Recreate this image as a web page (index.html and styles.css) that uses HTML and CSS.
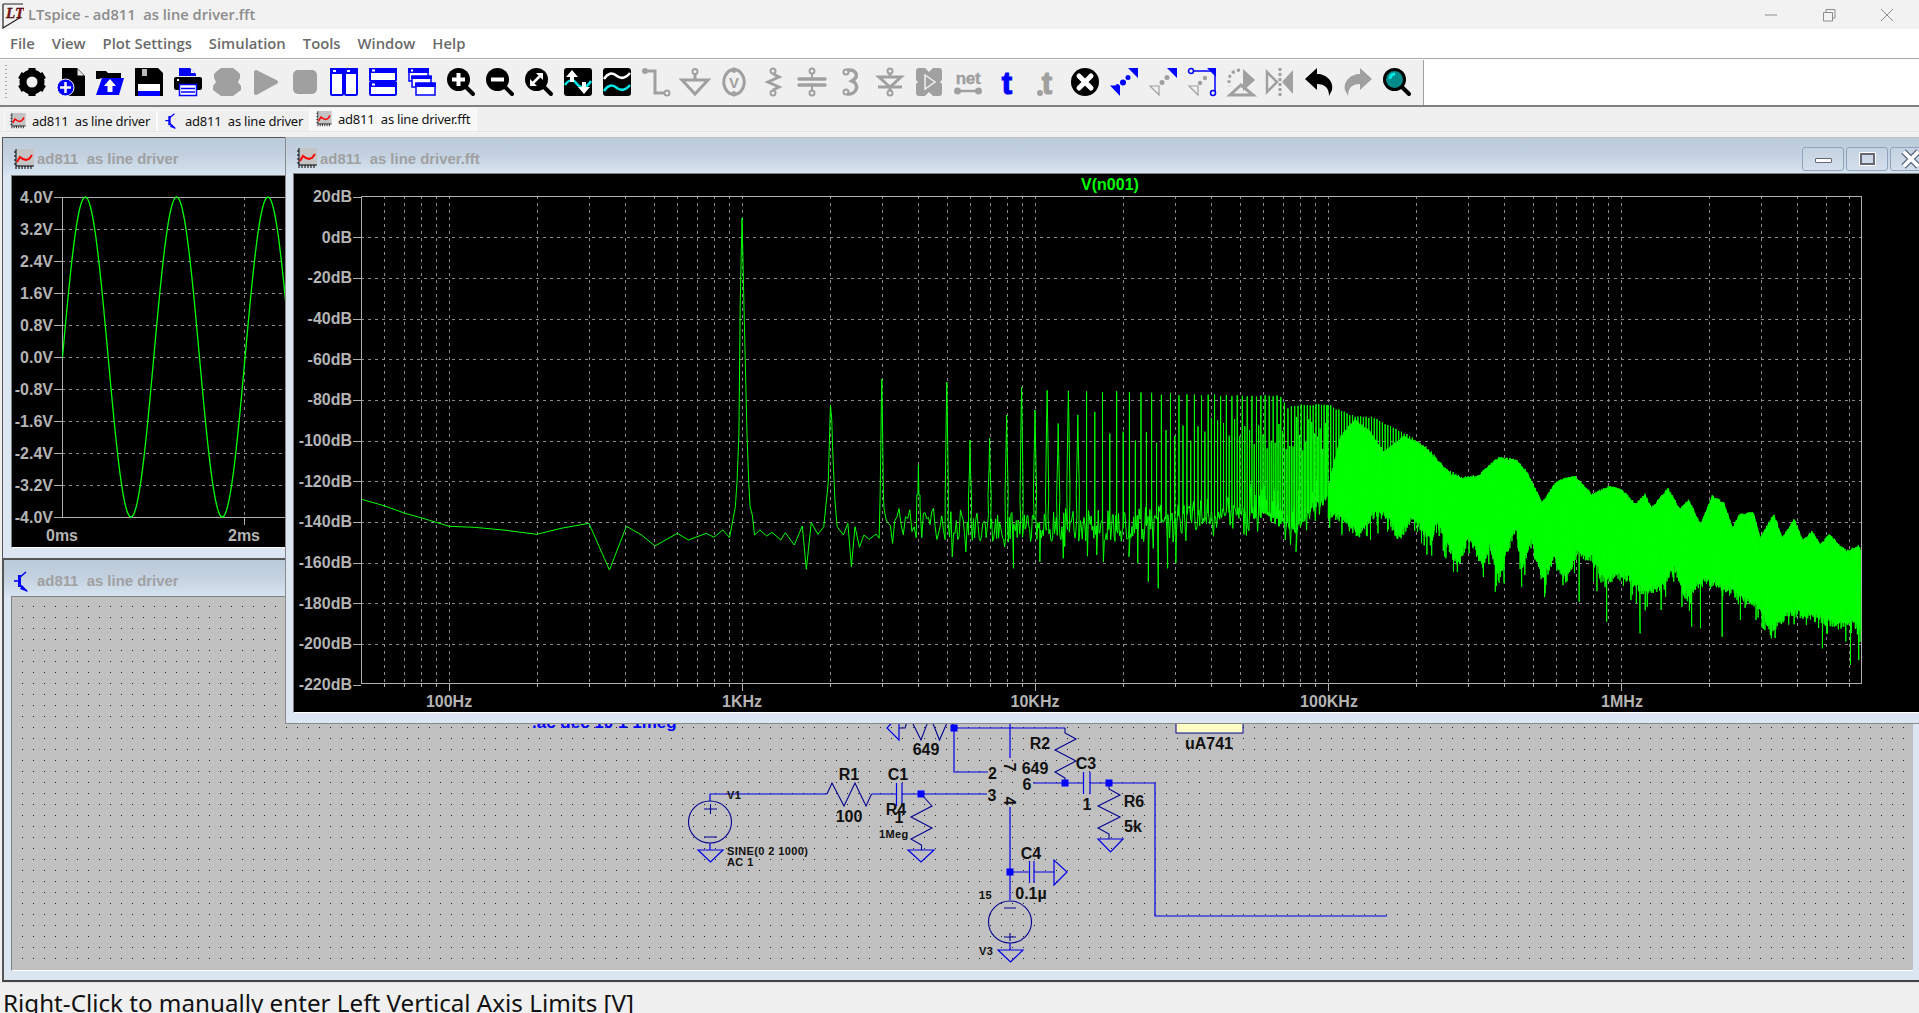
FILE: index.html
```html
<!DOCTYPE html>
<html lang="en">
<head>
<meta charset="utf-8">
<title>LTspice - ad811  as line driver.fft</title>
<link rel="stylesheet" href="styles.css">
</head>
<body>
<svg class="defs" width="0" height="0">
  <symbol id="chart" viewBox="0 0 20 21">
    <rect x="3" y="0" width="17" height="17" fill="#c4c4c4"/>
    <path d="M2 0V20M0 3H2M0 7H2M0 11H2M0 15H2M2 17H20M5 17V20M8 17V20M11 17V20M14 17V20M17 17V20" stroke="#000" stroke-width="1" fill="none"/>
    <path d="M3 13L6 8L9 10L12 11L15 10L18 6" stroke="#f00" stroke-width="2" fill="none"/>
  </symbol>
  <symbol id="bjt" viewBox="0 0 15 21">
    <path d="M0 10H5" stroke="#0000ff" stroke-width="1.600" fill="none"/>
    <path d="M5.500 4V16" stroke="#0000ff" stroke-width="3" fill="none"/>
    <path d="M5 7L12 1M5 13L13 20" stroke="#0000ff" stroke-width="1.600" fill="none"/>
    <path d="M8 14L14 21L6 18Z" fill="#0000ff"/>
  </symbol>
</svg>

<div class="app">
  <header class="titlebar">
    <svg class="logo" viewBox="0 0 22 28">
      <path d="M1 3H21M1 3V27L19 16" stroke="#222" stroke-width="1.200" fill="none"/>
      <text class="logo-t" x="4" y="17">LT</text>
    </svg>
    <span class="app-title">LTspice - ad811  as line driver.fft</span>
    <div class="caption">
      <svg viewBox="0 0 14 14"><path d="M1 7H13" stroke="#8c8c8c" fill="none"/></svg>
      <svg viewBox="0 0 14 14"><path d="M1.500 4.500H10.500V13H1.500ZM4 4V1.500H13V10H11" stroke="#8c8c8c" fill="none"/></svg>
      <svg viewBox="0 0 14 14"><path d="M1 1L13 13M13 1L1 13" stroke="#8c8c8c" fill="none"/></svg>
    </div>
  </header>

  <nav class="menubar">
    <span>File</span><span>View</span><span>Plot Settings</span><span>Simulation</span><span>Tools</span><span>Window</span><span>Help</span>
  </nav>

  <div class="toolrow">
    <div class="toolbar">
      <i class="grip"></i>
      <div class="icons">
        <!-- gear -->
        <svg viewBox="0 0 28 28"><circle cx="14" cy="14" r="9" fill="none" stroke="#000" stroke-width="7"/><g fill="#000"><rect x="10.500" y="0" width="7" height="5"/><rect x="10.500" y="23" width="7" height="5"/><rect x="10.500" y="0" width="7" height="5" transform="rotate(60 14 14)"/><rect x="10.500" y="0" width="7" height="5" transform="rotate(120 14 14)"/><rect x="10.500" y="0" width="7" height="5" transform="rotate(240 14 14)"/><rect x="10.500" y="0" width="7" height="5" transform="rotate(300 14 14)"/></g></svg>
        <!-- new -->
        <svg viewBox="0 0 28 28"><path d="M5 0H20L28 8V28H5Z" fill="#000"/><path d="M20.500 1L27 7.500H20.500Z" fill="#e8e8e8"/><circle cx="8.500" cy="19.500" r="8.500" fill="#0000ff" stroke="#fff" stroke-width="1"/><path d="M8.500 14V25M3 19.500H14" stroke="#fff" stroke-width="2.500"/></svg>
        <!-- open -->
        <svg viewBox="0 0 28 28"><path d="M0 11V3H10L12 5H25V10H6L3 11Z" fill="#000"/><path d="M6 10H28L23 27H0Z" fill="#0000ff"/><path d="M14 11L20 18H16.500V24H11.500V18H8Z" fill="#fff"/></svg>
        <!-- save -->
        <svg viewBox="0 0 28 28"><path d="M0 0H23L28 5V28H0Z" fill="#000"/><rect x="7" y="1" width="5" height="7" fill="#bbb"/><rect x="3" y="16" width="22" height="7" fill="#fff"/><rect x="3" y="23" width="22" height="5" fill="#0000ff"/></svg>
        <!-- print -->
        <svg viewBox="0 0 28 28"><path d="M5 0H16L22 6V8H5Z" fill="#0000ff"/><path d="M17 1L21 5H17Z" fill="#fff"/><rect x="0" y="9" width="28" height="13" rx="2" fill="#000"/><rect x="3" y="11" width="2" height="2" fill="#fff"/><rect x="5.500" y="16.500" width="17" height="11" fill="#fff" stroke="#0000ff" stroke-width="1.500"/><path d="M7 20.500H21M7 24H21" stroke="#0000ff" stroke-width="1.500"/></svg>
        <!-- halt -->
        <svg viewBox="0 0 28 28"><path d="M8 0H20L24 3L27 6V10L25 14L28 18V22L24 25L20 28H8L4 25L0 22V18L3 14L1 10V6L4 3Z" fill="#a0a0a0"/></svg>
        <!-- run -->
        <svg viewBox="0 0 28 28"><path d="M4 4L24 14L4 25Z" fill="#a0a0a0" stroke="#a0a0a0" stroke-width="4" stroke-linejoin="round"/></svg>
        <!-- stop -->
        <svg viewBox="0 0 28 28"><rect x="2" y="2" width="24" height="24" rx="5" fill="#a0a0a0"/></svg>
        <!-- tile v -->
        <svg viewBox="0 0 28 28"><g fill="#fff" stroke="#0000ff" stroke-width="2"><rect x="1" y="1" width="12" height="26" rx="1"/><rect x="15" y="1" width="12" height="26" rx="1"/></g><rect x="0" y="0" width="14" height="6" fill="#0000ff"/><rect x="14" y="0" width="14" height="6" fill="#0000ff"/><rect x="3" y="2" width="3" height="2" fill="#fff"/><rect x="17" y="2" width="3" height="2" fill="#fff"/></svg>
        <!-- tile h -->
        <svg viewBox="0 0 28 28"><g fill="#fff" stroke="#0000ff" stroke-width="2"><rect x="1" y="1" width="26" height="12" rx="1"/><rect x="1" y="15" width="26" height="12" rx="1"/></g><rect x="0" y="0" width="28" height="5" fill="#0000ff"/><rect x="0" y="14" width="28" height="5" fill="#0000ff"/><rect x="3" y="1.500" width="3" height="2" fill="#fff"/><rect x="3" y="15.500" width="3" height="2" fill="#fff"/></svg>
        <!-- cascade -->
        <svg viewBox="0 0 28 28"><g fill="#fff" stroke="#0000ff" stroke-width="1.500"><rect x="1" y="1" width="19" height="12"/><rect x="4" y="8" width="19" height="11"/><rect x="8" y="15" width="19" height="12"/></g><rect x="0" y="0" width="21" height="5" fill="#0000ff"/><rect x="3" y="8" width="21" height="3" fill="#0000ff"/><rect x="7" y="15" width="21" height="4" fill="#0000ff"/><rect x="3" y="1.500" width="2" height="2" fill="#fff"/></svg>
        <!-- zoom in -->
        <svg viewBox="0 0 28 28"><path d="M18 18L26 26" stroke="#000" stroke-width="4" stroke-linecap="round"/><circle cx="11.500" cy="11.500" r="11.500" fill="#000"/><path d="M11.500 5V18M5 11.500H18" stroke="#fff" stroke-width="4"/></svg>
        <!-- zoom out -->
        <svg viewBox="0 0 28 28"><path d="M18 18L26 26" stroke="#000" stroke-width="4" stroke-linecap="round"/><circle cx="11.500" cy="11.500" r="11.500" fill="#000"/><path d="M5 11.500H18" stroke="#fff" stroke-width="4"/></svg>
        <!-- zoom fit -->
        <svg viewBox="0 0 28 28"><path d="M18 18L26 26" stroke="#000" stroke-width="4" stroke-linecap="round"/><circle cx="11.500" cy="11.500" r="11.500" fill="#000"/><path d="M7 16L16 7" stroke="#fff" stroke-width="2.500"/><path d="M11 5H18V12ZM5 11V18H12Z" fill="#fff"/></svg>
        <!-- wave up/down -->
        <svg viewBox="0 0 28 28"><rect width="28" height="28" rx="3" fill="#000"/><path d="M1 17C5 11 9 11 13 16C17 21 22 21 27 13" stroke="#00e8e8" stroke-width="2.500" fill="none"/><path d="M8 2L14 9H10V14H6V9H2Z" fill="#fff"/><path d="M20 26L14 19H18V14H22V19H26Z" fill="#fff"/></svg>
        <!-- wave 2 -->
        <svg viewBox="0 0 28 28"><rect width="28" height="28" rx="3" fill="#000"/><path d="M1 11C5 5 9 4 14 8C18 11 22 11 27 5" stroke="#fff" stroke-width="2.500" fill="none"/><path d="M1 23C5 17 9 16 14 20C18 23 22 23 27 17" stroke="#00e8e8" stroke-width="2.500" fill="none"/></svg>
        <!-- wire -->
        <svg viewBox="0 0 28 28"><circle cx="3" cy="3" r="3" fill="#a0a0a0"/><path d="M3 3H13V25H22" stroke="#a0a0a0" stroke-width="3" fill="none"/><circle cx="25" cy="25" r="2.500" fill="none" stroke="#a0a0a0" stroke-width="2"/></svg>
        <!-- ground -->
        <svg viewBox="0 0 28 28"><circle cx="14" cy="3.500" r="2.500" fill="none" stroke="#a0a0a0" stroke-width="2"/><path d="M14 6V12M1 12H27L14 26Z" stroke="#a0a0a0" stroke-width="3" fill="none"/></svg>
        <!-- voltage -->
        <svg viewBox="0 0 28 28"><path d="M14 1L19 3C26 9 26 19 19 25L14 27L9 25C2 19 2 9 9 3Z" stroke="#a0a0a0" stroke-width="3" fill="none" stroke-linejoin="round"/><circle cx="14" cy="3" r="2" fill="#a0a0a0"/><circle cx="14" cy="25" r="2" fill="#a0a0a0"/><text class="ti ti-v" x="14" y="19.500">V</text></svg>
        <!-- resistor -->
        <svg viewBox="0 0 28 28"><g fill="none" stroke="#a0a0a0"><circle cx="14" cy="3" r="2.500" stroke-width="2"/><circle cx="14" cy="25" r="2.500" stroke-width="2"/><path d="M14 6L20 9L9 14L20 19L14 22" stroke-width="3"/></g></svg>
        <!-- capacitor -->
        <svg viewBox="0 0 28 28"><g fill="none" stroke="#a0a0a0"><circle cx="14" cy="3" r="2.500" stroke-width="2"/><circle cx="14" cy="25" r="2.500" stroke-width="2"/><path d="M14 6V11M14 17V22" stroke-width="2"/><path d="M1 11H27M1 17H27" stroke-width="3.500" stroke-linecap="round"/></g></svg>
        <!-- inductor -->
        <svg viewBox="0 0 28 28"><g fill="none" stroke="#a0a0a0"><circle cx="9" cy="4" r="2.500" stroke-width="2"/><circle cx="9" cy="24" r="2.500" stroke-width="2"/><path d="M10 2C19 1 23 8 15 13C23 16 20 27 10 26" stroke-width="3.500"/></g></svg>
        <!-- diode -->
        <svg viewBox="0 0 28 28"><g fill="none" stroke="#a0a0a0"><circle cx="14" cy="3" r="2.500" stroke-width="2"/><circle cx="14" cy="25" r="2.500" stroke-width="2"/><path d="M14 6V9M14 19V22M3 9H25L14 19Z" stroke-width="3"/><path d="M2 19H26" stroke-width="3"/></g></svg>
        <!-- component -->
        <svg viewBox="0 0 28 28"><rect x="1" y="0" width="26" height="28" rx="3" fill="#a0a0a0"/><path d="M10 0H18L14 4ZM10 28H18L14 24ZM0 11L3 14L0 17ZM28 11L25 14L28 17Z" fill="#f0f0f0"/><path d="M10 7L20 14L10 21Z" fill="#a0a0a0" stroke="#f0f0f0" stroke-width="1.500"/></svg>
        <!-- net -->
        <svg viewBox="0 0 28 28"><text class="ti ti-net" x="14" y="16">net</text><path d="M3 23H25" stroke="#a0a0a0" stroke-width="2.500"/><circle cx="3.500" cy="23" r="3.500" fill="#a0a0a0"/><circle cx="24.500" cy="23" r="3.500" fill="#a0a0a0"/></svg>
        <!-- text t -->
        <svg viewBox="0 0 28 28"><text class="ti ti-t ti-blue" x="14" y="26">t</text></svg>
        <!-- spice t -->
        <svg viewBox="0 0 28 28"><text class="ti ti-t" x="15" y="26">t</text><circle cx="8" cy="25" r="3" fill="#a0a0a0"/></svg>
        <!-- delete -->
        <svg viewBox="0 0 28 28"><circle cx="14" cy="14" r="14" fill="#000"/><path d="M8 8L20 20M20 8L8 20" stroke="#fff" stroke-width="5" stroke-linecap="round"/></svg>
        <!-- move -->
        <svg viewBox="0 0 28 28"><path d="M18 0H28V10ZM0 17.500H10V28Z" fill="#0000ff"/><circle cx="18" cy="9.500" r="2.500" fill="#0000ff"/><circle cx="13" cy="14.500" r="3" fill="#0000ff"/><circle cx="7.500" cy="18" r="2" fill="#0000ff"/></svg>
        <!-- drag -->
        <svg viewBox="0 0 28 28"><path d="M18 0H28V10Z" fill="#0000ff"/><path d="M1 18H10V27Z" fill="none" stroke="#a0a0a0" stroke-width="1.200"/><circle cx="18" cy="9.500" r="2.500" fill="#a0a0a0"/><circle cx="13" cy="14.500" r="2.500" fill="#a0a0a0"/></svg>
        <!-- wire drag -->
        <svg viewBox="0 0 28 28"><path d="M3 3H27V25" stroke="#0000ff" stroke-width="1.500" fill="none"/><path d="M19 0H28V9Z" fill="#0000ff"/><circle cx="3" cy="3" r="2.500" fill="#f0f0f0" stroke="#0000ff" stroke-width="1.500"/><circle cx="25" cy="25" r="2.500" fill="#f0f0f0" stroke="#0000ff" stroke-width="1.500"/><path d="M1 18H10V27Z" fill="none" stroke="#a0a0a0" stroke-width="1.200"/><circle cx="17" cy="10" r="2.200" fill="#a0a0a0"/><circle cx="12" cy="15" r="2.200" fill="#a0a0a0"/></svg>
        <!-- rotate -->
        <svg viewBox="0 0 28 28"><path d="M16 1L28 12L16 23Z" fill="#a0a0a0"/><path d="M3 27H26L14 17Z" fill="none" stroke="#a0a0a0" stroke-width="3"/><path d="M13 2C4 3 0 9 3 18" fill="none" stroke="#a0a0a0" stroke-width="3" stroke-dasharray="3 2.500"/></svg>
        <!-- mirror -->
        <svg viewBox="0 0 28 28"><path d="M1 4L11 14L1 24Z" fill="none" stroke="#a0a0a0" stroke-width="2.500"/><path d="M27 2V26L16 14Z" fill="#a0a0a0"/><path d="M14 0V28" stroke="#a0a0a0" stroke-width="3" stroke-dasharray="3 2"/></svg>
        <!-- undo -->
        <svg viewBox="0 0 28 28"><path d="M0 11L12 0V6C22 6 29 14 27 22L24 28C24 20 20 16 12 16V22Z" fill="#000"/></svg>
        <!-- redo -->
        <svg viewBox="0 0 28 28"><path d="M28 11L16 0V6C6 6 -1 14 1 22L4 28C4 20 8 16 16 16V22Z" fill="#a0a0a0"/></svg>
        <!-- find -->
        <svg viewBox="0 0 28 28"><path d="M18 18L26 26" stroke="#000" stroke-width="4" stroke-linecap="round"/><circle cx="11.500" cy="11.500" r="10" fill="#008b8b" stroke="#000" stroke-width="3"/><path d="M7 11C7 8 9 6 12 6" stroke="#00e8e8" stroke-width="3" fill="none"/></svg>
      </div>
    </div>
    <div class="tool-blank"></div>
  </div>

  <div class="tabbar">
    <div class="tab"><svg class="tab-ic"><use href="#chart"/></svg><span>ad811  as line driver</span></div>
    <div class="tab"><svg class="tab-ic"><use href="#bjt"/></svg><span>ad811  as line driver</span></div>
    <div class="tab tab-on"><svg class="tab-ic"><use href="#chart"/></svg><span>ad811  as line driver.fft</span></div>
  </div>

  <main class="mdi">
    <!-- waveform window -->
    <section class="win win-wave">
      <div class="win-title"><svg class="win-ic"><use href="#chart"/></svg><span>ad811  as line driver</span></div>
      <div class="win-body">
        <svg class="plot plot-wave" viewBox="12 176 300 371" id="wave">
          <g id="wave-grid"></g>
          <path id="wave-trace" class="trace trace-wave"/>
          <g class="ylab">
            <text x="53" y="203">4.0V</text><text x="53" y="235">3.2V</text><text x="53" y="267">2.4V</text><text x="53" y="299">1.6V</text><text x="53" y="331">0.8V</text><text x="53" y="363">0.0V</text><text x="53" y="395">-0.8V</text><text x="53" y="427">-1.6V</text><text x="53" y="459">-2.4V</text><text x="53" y="491">-3.2V</text><text x="53" y="523">-4.0V</text>
          </g>
          <g class="xlab"><text x="62" y="541">0ms</text><text x="244" y="541">2ms</text></g>
        </svg>
      </div>
    </section>

    <!-- schematic window -->
    <section class="win win-sch">
      <div class="win-title"><svg class="win-ic win-ic-bjt"><use href="#bjt"/></svg><span>ad811  as line driver</span></div>
      <div class="win-body">
        <svg class="sheet" viewBox="12 597 1901 372">
          <defs><pattern id="dots" x="22" y="606" width="11" height="11" patternUnits="userSpaceOnUse"><rect width="1" height="1" class="dot"/></pattern></defs>
          <rect x="12" y="597" width="1901" height="372" fill="url(#dots)"/>
          <text class="sc-dir" x="532" y="728">.ac dec 10 1 1meg</text>
          <rect class="sc-op" x="1176" y="715" width="67" height="18"/>
          <g class="wire">
            <path d="M710 801V794H827M871.500 794H896.500M902 794H987"/>
            <path d="M954 728H1065M954 728V772H988M1010 715V758M1010 807V900"/>
            <path d="M1033 783H1083.500M1090 783H1155V916H1387"/>
            <path d="M1010 872H1029.500M1034 872H1054"/>
            <path d="M710 843V850M1010 943V950"/>
            <path d="M896.500 783V806M902 783V806M1083.500 772V794M1090 772V794M1029.500 861V883M1034 861V883"/>
            <path d="M698 850H723L710.500 862ZM908 850H934L921 862ZM1098 839H1123L1110.500 852ZM998 950H1023L1010.500 962Z"/>
            <path d="M1054 860V885L1067 872Z"/>
            <path d="M899 715V740L887 728Z"/>
          </g>
          <g class="part">
            <path d="M827 794L832 783L844 806L855 783L866 806L871.500 794"/>
            <path d="M921 794L932 806L911 817L932 828L911 839L921.500 845V850"/>
            <path d="M1065 728V733L1076 739L1055 750L1076 761L1055 772L1065 778V783"/>
            <path d="M1109 783V789L1120 795L1098 806L1120 817L1098 828L1109 834V839"/>
            <path d="M899 728H905L909 716L921 740L930 716L939.500 740L950 716L954 728"/>
            <ellipse cx="710" cy="822" rx="21.500" ry="21"/>
            <ellipse cx="1010" cy="922" rx="21.500" ry="21"/>
            <path d="M704 809H717M710.500 804V814M704 837H717M1004 908H1016M1004 937H1016M1010 933V941"/>
          </g>
          <g class="node">
            <rect x="950.500" y="724.500" width="7" height="7"/><rect x="917.500" y="790.500" width="7" height="7"/><rect x="1061.500" y="779.500" width="7" height="7"/><rect x="1105.500" y="779.500" width="7" height="7"/><rect x="1006.500" y="868.500" width="7" height="7"/>
          </g>
          <g class="sc-lab">
            <text x="849" y="780">R1</text><text x="849" y="822">100</text><text x="898" y="780">C1</text><text x="896" y="815">R4</text><text x="899" y="823">1</text>
            <text x="926" y="755">649</text><text x="1040" y="749">R2</text><text x="1035" y="774">649</text><text x="1086" y="769">C3</text><text x="1087" y="810">1</text>
            <text x="1134" y="807">R6</text><text x="1133" y="832">5k</text><text x="1027" y="790">6</text><text x="992.500" y="779">2</text><text x="992" y="801">3</text>
            <text x="1209" y="749">uA741</text><text x="1031" y="859">C4</text><text x="1031" y="899">0.1µ</text>
            <text class="rot-7" x="0" y="0">7</text><text class="rot-4" x="0" y="0">4</text>
          </g>
          <g class="sc-small">
            <text x="727" y="799">V1</text><text x="727" y="855">SINE(0 2 1000)</text><text x="727" y="866">AC 1</text><text x="879" y="838">1Meg</text><text x="979" y="899">15</text><text x="979" y="955">V3</text>
          </g>
        </svg>
      </div>
    </section>

    <!-- FFT window -->
    <section class="win win-fft">
      <div class="win-title">
        <svg class="win-ic"><use href="#chart"/></svg><span>ad811  as line driver.fft</span>
        <div class="win-btns">
          <button class="wb"><i class="wb-min"></i></button>
          <button class="wb"><i class="wb-max"></i></button>
          <button class="wb"><svg class="wb-x" viewBox="0 0 16 16"><path d="M2 2L14 14M14 2L2 14" stroke="#5a6a80" stroke-width="5"/><path d="M2 2L14 14M14 2L2 14" stroke="#fff" stroke-width="3"/></svg></button>
        </div>
      </div>
      <div class="win-body">
        <svg class="plot plot-fft" viewBox="294 174 1625 539">
          <g id="fft-grid"></g>
          <path id="fft-trace" class="trace"/>
          <text class="vname" x="1110" y="190">V(n001)</text>
          <g class="ylab">
            <text x="352" y="202">20dB</text><text x="352" y="243">0dB</text><text x="352" y="283">-20dB</text><text x="352" y="324">-40dB</text><text x="352" y="365">-60dB</text><text x="352" y="405">-80dB</text><text x="352" y="446">-100dB</text><text x="352" y="487">-120dB</text><text x="352" y="527">-140dB</text><text x="352" y="568">-160dB</text><text x="352" y="609">-180dB</text><text x="352" y="649">-200dB</text><text x="352" y="690">-220dB</text>
          </g>
          <g class="xlab"><text x="449" y="707">100Hz</text><text x="742" y="707">1KHz</text><text x="1035" y="707">10KHz</text><text x="1329" y="707">100KHz</text><text x="1622" y="707">1MHz</text></g>
        </svg>
      </div>
    </section>
  </main>

  <footer class="status">Right-Click to manually enter Left Vertical Axis Limits [V]</footer>
</div>
<script src="script.js"></script>
</body>
</html>
```
FILE: styles.css
```css
* { box-sizing: border-box; }
html, body { margin: 0; padding: 0; height: 100%; overflow: hidden; background: #f0f0f0; }
.defs { position: absolute; }
.app { width: 1919px; height: 1013px; display: flex; flex-direction: column; font-family: "Noto Sans", sans-serif; }

.titlebar { height: 29px; background: #f2f2f2; display: flex; align-items: center; padding-left: 2px; }
.logo { width: 22px; height: 28px; }
.logo-t { font: italic bold 15px "Liberation Serif", serif; fill: #8a1515; stroke: #300; stroke-width: .3px; }
.app-title { margin: 0 0 2px 4px; font: 600 14.700px "Open Sans", sans-serif; color: #8c8c8c; white-space: pre; }
.caption { margin-left: auto; display: flex; gap: 44px; padding-right: 25px; }
.caption svg { width: 14px; height: 14px; }

.menubar { height: 30px; background: #fff; border-bottom: 1px solid #a8a8a8; display: flex; align-items: center; gap: 17px; padding: 0 0 2px 10px; font: 600 14.800px "Open Sans", sans-serif; color: #6a6a6a; }

.toolrow { height: 48px; display: flex; border-bottom: 2px solid #808080; background: #fff; }
.toolbar { width: 1424px; background: #f0f0f0; border-right: 1px solid #a0a0a0; display: flex; align-items: center; padding: 0 0 1px 5px; margin-top: 1px; }
.grip { width: 2px; height: 34px; margin-right: 11px; background: repeating-linear-gradient(to bottom, #a8a8a8 0 1px, transparent 1px 4px); }
.icons { display: flex; gap: 11px; }
.icons svg { width: 28px; height: 28px; flex: none; overflow: visible; }
.tool-blank { flex: 1; }
.ti { font-family: "Liberation Sans", sans-serif; font-weight: 700; fill: #a0a0a0; text-anchor: middle; }
.ti-v { font-size: 15px; }
.ti-net { font-size: 17px; letter-spacing: -.3px; stroke: #a0a0a0; stroke-width: .4px; }
.ti-t { font-size: 31px; stroke: #a0a0a0; stroke-width: 1.200px; }
.ti-blue { fill: #0000ff; stroke: #0000ff; }

.tabbar { height: 29px; padding-left: 4px; display: flex; align-items: flex-start; background: linear-gradient(to bottom, #f0f0f0 0 24px, #e4e4e4 24px 25px, #f6f6f6 25px 26px, #f0f0f0 26px); font: 13px "Noto Sans", sans-serif; letter-spacing: -.22px; color: #111; white-space: pre; }
.tab { margin-top: 3px; height: 21px; width: 153px; padding: 0 0 1px 5px; display: flex; align-items: center; gap: 6px; background: #efefef; border-right: 1px solid #fafafa; border-left: 1px solid #fafafa; border-top: 1px solid #f8f8f8; }
.tab-on { margin-top: 1px; height: 23px; width: 167px; background: #f8f8f8; padding-bottom: 3px; }
.tab-ic { width: 16px; height: 16px; flex: none; }

.mdi { position: relative; flex: 1; overflow: hidden; background: #f0f0f0; }
.win { position: absolute; display: flex; flex-direction: column; background: #dbe6f2; }
.win-title { flex: none; display: flex; align-items: center; background: linear-gradient(to bottom, #bccbdb, #c2d0df 45%, #d6e3f0); font: 700 14.900px "Liberation Sans", sans-serif; color: #a0a0a0; white-space: pre; padding-left: 11px; gap: 3px; }
.win-ic { width: 20px; height: 21px; flex: none; }
.win-ic-bjt { width: 15px; margin-right: 5px; }
.win-body { flex: 1; min-height: 0; overflow: hidden; }

.win-wave { left: 2px; top: 1px; width: 330px; height: 421px; border-left: 1px solid #555; border-top: 1px solid #555; }
.win-wave .win-title { height: 37px; padding-top: 5px; }
.win-wave .win-body { margin: 0 0 10px 8px; border-left: 1px solid #808080; border-top: 1px solid #808080; border-bottom: 1px solid #fff; background: #000; }
.plot { display: block; background: #000; }
.plot-wave { width: 300px; height: 371px; }

.win-sch { left: 2px; top: 422px; width: 1917px; height: 424px; border-left: 2px solid #555; border-top: 2px solid #555; border-bottom: 2px solid #444; }
.win-sch .win-title { height: 36px; padding: 6px 0 0 10px; }
.win-sch .win-body { margin: 0 6px 9px 7px; background: #c0c0c0; border-top: 1px solid #808080; border-left: 1px solid #808080; border-bottom: 1px solid #fff; }
.sheet { display: block; width: 1901px; height: 372px; }
.dot { fill: #222; }

.win-fft { left: 285px; top: 1px; width: 1650px; height: 587px; border: 1px solid #8a8a8a; border-top-color: #c0c0c0; }
.win-fft .win-title { height: 35px; padding: 6px 0 0 11px; }
.win-fft .win-body { margin: 0 0 10px 7px; border-left: 1px solid #808080; border-top: 1px solid #808080; border-bottom: 1px solid #fff; background: #000; }
.plot-fft { width: 1625px; height: 539px; }

.win-btns { margin-left: auto; display: flex; gap: 2px; padding-right: 2px; }
.wb { width: 42px; height: 24px; padding: 0; border: 1px solid #8fa3bb; border-radius: 3px; background: linear-gradient(to bottom, #c4d1e0, #d3dfec); display: flex; align-items: center; justify-content: center; }
.wb-min { width: 17px; height: 5px; background: #fff; border: 1px solid #667; border-radius: 1px; margin-top: 3px; }
.wb-max { width: 15px; height: 12px; background: transparent; border: 2px solid #667; outline: 1px solid #fff; }
.wb-x { width: 20px; height: 20px; }

.trace { fill: none; stroke: #00ff00; stroke-width: 1px; }
.trace-wave { stroke-width: 1.300px; }
.axis { stroke: #b0b0b0; stroke-width: 1px; fill: none; shape-rendering: crispEdges; }
.grid { stroke: #8a8a8a; stroke-width: 1px; fill: none; stroke-dasharray: 3 4; shape-rendering: crispEdges; }
.ylab text, .xlab text, .vname { font: 700 16px "Liberation Sans", sans-serif; fill: #b4b4b4; }
.ylab text { text-anchor: end; }
.xlab text { text-anchor: middle; }
.vname { fill: #00ff00; text-anchor: middle; }

.wire path { fill: none; stroke: #0000e6; stroke-width: 1.200px; }
.part path, .part ellipse { fill: none; stroke: #000090; stroke-width: 1.100px; }
.node rect { fill: #0000ff; }
.sc-lab text { font: 700 16px "Liberation Sans", sans-serif; fill: #111; text-anchor: middle; }
.sc-small text { font: 700 11px "Liberation Sans", sans-serif; letter-spacing: .4px; fill: #111; }
.sc-dir { font: 700 17px "Liberation Sans", sans-serif; fill: #0000ff; }
.sc-op { fill: #ffffc4; stroke: #000090; stroke-width: 1px; }
.rot-7 { transform: translate(1004px, 767px) rotate(90deg); }
.rot-4 { transform: translate(1004px, 801px) rotate(90deg); }

.status { height: 31px; flex: none; padding: 5px 0 0 3px; font: 24.200px/30px "Noto Sans", sans-serif; color: #111; overflow: hidden; white-space: nowrap; border-top: 1px solid #e0e0e0; }
```
FILE: script.js
```js
(function () {
  var NS = 'http://www.w3.org/2000/svg';
  var seed = 20240611;
  function rnd() {
    seed = (seed * 1664525 + 1013904223) >>> 0;
    return (seed >>> 8) / 16777216;
  }
  function line(parent, cls, d) {
    var p = document.createElementNS(NS, 'path');
    p.setAttribute('class', cls);
    p.setAttribute('d', d);
    parent.appendChild(p);
  }
  function lerp(tbl, zx) {
    if (zx <= tbl[0][0]) return tbl[0][1];
    for (var i = 1; i < tbl.length; i++) {
      if (zx <= tbl[i][0]) {
        var a = tbl[i - 1], b = tbl[i];
        return a[1] + (b[1] - a[1]) * (zx - a[0]) / (b[0] - a[0]);
      }
    }
    return tbl[tbl.length - 1][1];
  }

  /* ---- waveform plot ---- */
  var wg = document.getElementById('wave-grid');
  var d = '';
  for (var v = 1; v < 10; v++) d += 'M62 ' + (197.5 + v * 32) + 'H320';
  d += 'M244.500 197V517';
  line(wg, 'grid', d);
  d = 'M62.500 197V517M62 197.500H320M62 517.500H320M244.500 517V525';
  for (v = 0; v <= 10; v++) d += 'M54 ' + (197.5 + v * 32) + 'H62';
  line(wg, 'axis', d);
  d = '';
  for (var x = 62.5; x <= 320; x += 1) {
    var y = 357 - 160 * Math.sin((x - 62.5) * 2 * Math.PI / 91.3);
    d += (d ? 'L' : 'M') + x + ' ' + y.toFixed(1);
  }
  document.getElementById('wave-trace').setAttribute('d', d);

  /* ---- FFT plot ---- */
  function X(f) { return 449 + 293 * Math.log10(f / 100); }
  var fg = document.getElementById('fft-grid');
  var ybase = 196.5, ystep = 40.67;
  d = '';
  for (v = 1; v < 12; v++) d += 'M361 ' + Math.round(ybase + v * ystep) + 'H1861';
  var ticks = '';
  var dec = [10, 100, 1000, 10000, 100000, 1000000];
  dec.forEach(function (dd) {
    for (var m = 1; m < 10; m++) {
      var f = dd * m;
      var xx = X(f);
      if (xx <= 362 || xx >= 1861) continue;
      xx = Math.round(xx) + 0.5;
      d += 'M' + xx + ' 196V683';
      ticks += 'M' + xx + ' 683V' + (m === 1 ? 691 : 687);
    }
  });
  line(fg, 'grid', d);
  d = 'M361.500 196V683M361 196.500H1861.500V683.500H361' + ticks;
  for (v = 0; v <= 12; v++) d += 'M353 ' + Math.round(ybase + v * ystep) + 'H361';
  line(fg, 'axis', d);

  var pts = [];
  function add(px, py) { pts.push(px.toFixed(2) + ' ' + py.toFixed(1)); }

  /* low end, traced from the reference */
  [[183, 298], [235, 318], [280, 340], [320, 355], [379, 379], [435, 382], [500, 390], [575, 403], [630, 385], [692, 370], [738, 510], [776, 379], [810, 405], [840, 438], [890, 400], [915, 420], [955, 400], [972, 412], [992, 390], [1007, 413], [1020, 320], [1024, 240], [1028, 100], [1031, -300], [1035, -546], [1039, -300], [1046, 100], [1050, 250], [1053, 320], [1058, 345], [1063, 405], [1075, 390], [1090, 408], [1102, 397], [1122, 420], [1132, 398], [1152, 435], [1170, 378], [1179, 508], [1190, 368], [1205, 403], [1218, 380], [1228, 250], [1233, 15], [1236, 60], [1238, 150], [1243, 300], [1248, 380], [1262, 405], [1272, 370], [1280, 500], [1288, 380], [1298, 442], [1308, 405], [1320, 418], [1335, 402], [1342, 415]].forEach(function (p) {
    add(280 + p[0] / 2.24, 400 + p[1] / 3);
  });

  var TOP = [[0, 20], [300, 40], [480, 45], [490, 80], [510, 72], [560, 72], [600, 105], [640, 110], [680, 150], [700, 165], [730, 200], [760, 265], [790, 290], [815, 285], [850, 230], [880, 235], [900, 275], [925, 365], [950, 300], [980, 285], [1010, 340], [1040, 315], [1060, 325], [1085, 370], [1100, 340], [1112, 380], [1140, 322], [1160, 385], [1175, 355], [1195, 430], [1215, 345], [1235, 365], [1250, 440], [1262, 400], [1285, 395], [1297, 470], [1320, 400], [1335, 470], [1355, 415], [1370, 480], [1385, 450], [1400, 490], [1415, 460], [1430, 490], [1445, 510], [1465, 495], [1470, 510]];
  var SOLID = [[540, 340], [560, 320], [580, 170], [605, 115], [630, 150], [655, 210], [690, 165], [720, 190], [745, 235], [770, 280], [790, 292]];
  var BOT = [[-200, 470], [0, 490], [100, 480], [200, 490], [300, 460], [400, 445], [470, 470], [500, 500], [530, 440], [560, 405], [590, 420], [610, 470], [640, 400], [660, 410], [680, 480], [705, 410], [735, 490], [745, 430], [780, 560], [800, 480], [825, 560], [835, 490], [850, 600], [880, 440], [890, 580], [905, 480], [925, 600], [945, 540], [965, 600], [985, 520], [1010, 540], [1030, 600], [1065, 590], [1100, 640], [1130, 620], [1150, 570], [1170, 650], [1200, 600], [1250, 640], [1290, 680], [1316, 750], [1350, 700], [1400, 720], [1430, 740], [1450, 720], [1470, 760]];
  var DEEP = [[23, 565], [68, 545], [108, 535], [165, 525], [220, 530], [235, 550], [253, 605], [270, 625], [286, 565], [300, 550], [505, 515], [780, 575], [845, 635], [860, 610], [890, 620], [930, 640], [988, 665], [1035, 725], [1092, 760], [1128, 690], [1180, 740], [1195, 745], [1232, 770], [1316, 775], [1403, 805], [1451, 855], [1465, 840]];
  function zx(px) { return (px - 1000) * 1.706; }
  function topY(px) { return 380 + lerp(TOP, zx(px)) / 3; }
  function botY(px) { return 380 + lerp(BOT, zx(px)) / 3; }
  function solidY(px) {
    var z = zx(px);
    if (z > 790) return topY(px);
    return 380 + lerp(SOLID, z) / 3;
  }
  var deepIdx = 0;
  function deep(px) {
    while (deepIdx < DEEP.length && 1000 + DEEP[deepIdx][0] / 1.706 <= px) {
      var q = DEEP[deepIdx++];
      add(1000 + q[0] / 1.706, 380 + q[1] / 3);
    }
  }
  var lowTop = { 3: 379, 4: 465, 5: 382, 6: 440, 7: 438, 8: 415, 9: 387, 10: 410 };
  var n = 3, px = X(3000);
  while (px < 1328) {
    var top;
    if (lowTop[n]) top = lowTop[n];
    else if (n % 2) top = topY(px) + rnd() * 2;
    else if (px < 1100) top = topY(px) + Math.max(10, 32 * (1 - (px - 1035) / 120)) + rnd() * 10;
    else top = 380 + (110 + rnd() * 110) / 3;
    var next = X((n + 1) * 1000);
    var band = botY(px) - 12 - rnd() * 12;
    if (n <= 14) {
      add(px - 1.6, band - 25);
      add(px - 0.5, top + 30);
      add(px, top);
      add(px + 0.5, top + 30);
      add(px + 1.6, band - 25);
    } else {
      add(px - 0.12, band);
      add(px, top);
      add(px + 0.12, band);
    }
    var gap = next - px;
    var m = Math.max(0, Math.min(16, Math.round(gap / 0.9) - 1));
    for (var k = 1; k <= m; k++) {
      var qx = px + gap * k / (m + 1);
      deep(qx);
      var qy = botY(qx) - rnd() * (px > 1240 ? 50 : 32);
      if (rnd() < 0.16) qy += rnd() * 26;
      add(qx, qy);
    }
    px = next;
    n++;
  }
  var col = 0;
  for (px = 1328; px <= 1861; px += 0.34) {
    deep(px);
    if (col % 2 === 0) {
      var edge = (col % 8 === 0) ? topY(px) + rnd() * 2 : solidY(px) + rnd() * 2.5;
      add(px, edge);
    } else {
      var b = botY(px) + (rnd() - 0.6) * 9;
      if (rnd() < 0.14) b += rnd() * 20;
      add(px, b);
    }
    col++;
  }
  document.getElementById('fft-trace').setAttribute('d', 'M' + pts.join('L'));
})();
```
